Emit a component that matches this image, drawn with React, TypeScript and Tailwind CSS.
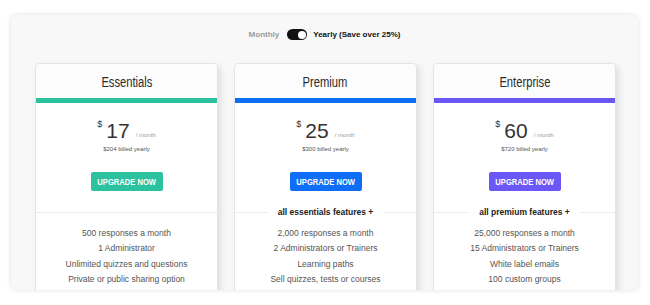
import React from "react";

type Plan = {
  name: string;
  price: string;
  billed: string;
  color: string;
  heading: string | null;
  features: string[];
};

const plans: Plan[] = [
  {
    name: "Essentials",
    price: "17",
    billed: "$204",
    color: "#2cc19f",
    heading: null,
    features: [
      "500 responses a month",
      "1 Administrator",
      "Unlimited quizzes and questions",
      "Private or public sharing option",
    ],
  },
  {
    name: "Premium",
    price: "25",
    billed: "$300",
    color: "#0f6ef6",
    heading: "all essentials features +",
    features: [
      "2,000 responses a month",
      "2 Administrators or Trainers",
      "Learning paths",
      "Sell quizzes, tests or courses",
    ],
  },
  {
    name: "Enterprise",
    price: "60",
    billed: "$720",
    color: "#6b56f6",
    heading: "all premium features +",
    features: [
      "25,000 responses a month",
      "15 Administrators or Trainers",
      "White label emails",
      "100 custom groups",
    ],
  },
];

function Card({ plan }: { plan: Plan }) {
  return (
    <div className="h-[240px] flex flex-col bg-white border border-[#e4e4e4] rounded-t-[4px] shadow-[3px_3px_6px_rgba(0,0,0,0.10)]">
      <div className="h-[34px] flex items-center justify-center bg-[#fcfcfc] rounded-t-[4px]">
        <span className="inline-block text-[14px] leading-none text-[#2a2a2a] scale-x-[0.8] pt-[1px]">
          {plan.name}
        </span>
      </div>
      <div className="h-[5px]" style={{ backgroundColor: plan.color }} />
      <div className="flex flex-col items-center pt-[17px]">
        <div className="flex items-baseline justify-center text-[#333]">
          <span className="self-start text-[9px] leading-none mr-[4px]">$</span>
          <span className="text-[21px] leading-none">{plan.price}</span>
          <span className="text-[6px] leading-none text-[#9a9a9a] ml-[6px] relative -top-[1px]">/ month</span>
        </div>
        <div className="mt-[5px] text-[6px] leading-none text-[#555]">{plan.billed} billed yearly</div>
        <div
          className="mt-[20px] w-[72px] h-[19px] rounded-[2px] flex items-center justify-center"
          style={{ backgroundColor: plan.color }}
        >
          <span className="inline-block text-[9.5px] font-bold leading-none text-white scale-x-[0.8] whitespace-nowrap">
            UPGRADE NOW
          </span>
        </div>
      </div>
      <div className="mt-[16px] h-[10px] flex items-center w-full">
        {plan.heading ? (
          <>
            <div className="flex-1 h-px bg-[#ececec]" />
            <span className="px-[10px] text-[8.5px] font-bold leading-none text-[#222] whitespace-nowrap">
              {plan.heading}
            </span>
            <div className="flex-1 h-px bg-[#ececec]" />
          </>
        ) : (
          <div className="flex-1 h-px bg-[#ececec]" />
        )}
      </div>
      <div className="mt-[9px] flex flex-col items-center text-[8.5px] leading-[15.4px] text-[#555]">
        {plan.features.map((f) => (
          <div key={f} className="whitespace-nowrap">{f}</div>
        ))}
      </div>
    </div>
  );
}

export default function App() {
  return (
    <div
      className="w-[650px] h-[305px] bg-white pt-[15px] pl-[11px] overflow-hidden"
      style={{ fontFamily: '"Liberation Sans", Arial, sans-serif' }}
    >
      <div className="w-[627px] h-[275px] rounded-[6px] bg-[#f8f8f8] shadow-[0_0_5px_rgba(0,0,0,0.13)] overflow-hidden flex flex-col">
        <div className="pt-[14px] flex items-center justify-center">
          <span className="text-[8px] font-bold text-[#9b9b9b] leading-none">Monthly</span>
          <div className="ml-[8px] w-[20px] h-[11px] rounded-full bg-[#111] relative">
            <div className="absolute right-[1.5px] top-[1.5px] w-[8px] h-[8px] rounded-full bg-white" />
          </div>
          <span className="ml-[6px] text-[8px] font-bold text-[#111] leading-none">
            Yearly (Save over 25%)
          </span>
        </div>
        <div className="mt-[23px] pl-[24px] pr-[22px] grid grid-cols-3 gap-[16px]">
          {plans.map((p) => (
            <Card key={p.name} plan={p} />
          ))}
        </div>
      </div>
    </div>
  );
}
